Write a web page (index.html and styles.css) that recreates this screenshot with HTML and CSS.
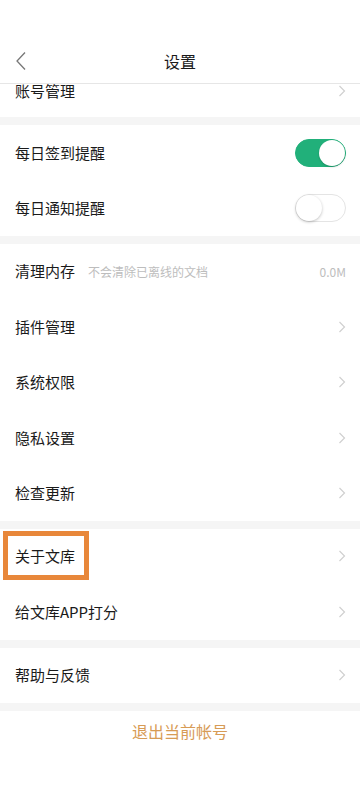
FILE: index.html
```html
<!DOCTYPE html>
<html lang="zh-CN">
<head>
<meta charset="utf-8">
<title>设置</title>
<link rel="stylesheet" href="styles.css">
</head>
<body>
<div class="page">
  <header class="header">
    <div class="nav">
      <svg class="back" width="14" height="20" viewBox="0 0 14 20"><path d="M11 1.5 L3 10 L11 18.5" fill="none" stroke="#777" stroke-width="1.3"/></svg>
      <div class="title">设置</div>
    </div>
  </header>

  <section class="group">
    <div class="row row-clipped">
      <span class="label">账号管理</span>
      <svg class="chev" width="8" height="12" viewBox="0 0 8 12"><path d="M1.5 1 L6.5 6 L1.5 11" fill="none" stroke="#d0d0d0" stroke-width="1.2"/></svg>
    </div>
  </section>

  <section class="group">
    <div class="row">
      <span class="label">每日签到提醒</span>
      <span class="switch on"><span class="knob"></span></span>
    </div>
    <div class="row">
      <span class="label">每日通知提醒</span>
      <span class="switch"><span class="knob"></span></span>
    </div>
  </section>

  <section class="group">
    <div class="row">
      <span class="label">清理内存</span>
      <span class="hint">不会清除已离线的文档</span>
      <span class="value">0.0M</span>
    </div>
    <div class="row">
      <span class="label">插件管理</span>
      <svg class="chev" width="8" height="12" viewBox="0 0 8 12"><path d="M1.5 1 L6.5 6 L1.5 11" fill="none" stroke="#d0d0d0" stroke-width="1.2"/></svg>
    </div>
    <div class="row">
      <span class="label">系统权限</span>
      <svg class="chev" width="8" height="12" viewBox="0 0 8 12"><path d="M1.5 1 L6.5 6 L1.5 11" fill="none" stroke="#d0d0d0" stroke-width="1.2"/></svg>
    </div>
    <div class="row">
      <span class="label">隐私设置</span>
      <svg class="chev" width="8" height="12" viewBox="0 0 8 12"><path d="M1.5 1 L6.5 6 L1.5 11" fill="none" stroke="#d0d0d0" stroke-width="1.2"/></svg>
    </div>
    <div class="row">
      <span class="label">检查更新</span>
      <svg class="chev" width="8" height="12" viewBox="0 0 8 12"><path d="M1.5 1 L6.5 6 L1.5 11" fill="none" stroke="#d0d0d0" stroke-width="1.2"/></svg>
    </div>
  </section>

  <section class="group">
    <div class="row">
      <span class="highlight"></span>
      <span class="label">关于文库</span>
      <svg class="chev" width="8" height="12" viewBox="0 0 8 12"><path d="M1.5 1 L6.5 6 L1.5 11" fill="none" stroke="#d0d0d0" stroke-width="1.2"/></svg>
    </div>
    <div class="row">
      <span class="label">给文库APP打分</span>
      <svg class="chev" width="8" height="12" viewBox="0 0 8 12"><path d="M1.5 1 L6.5 6 L1.5 11" fill="none" stroke="#d0d0d0" stroke-width="1.2"/></svg>
    </div>
  </section>

  <section class="group">
    <div class="row">
      <span class="label">帮助与反馈</span>
      <svg class="chev" width="8" height="12" viewBox="0 0 8 12"><path d="M1.5 1 L6.5 6 L1.5 11" fill="none" stroke="#d0d0d0" stroke-width="1.2"/></svg>
    </div>
  </section>

  <div class="logout">退出当前帐号</div>
</div>
</body>
</html>
```

FILE: styles.css
```css
* { box-sizing: border-box; }
html, body { margin: 0; padding: 0; background: #fff; }
body {
  font-family: "Noto Sans CJK SC", "Noto Sans", "Liberation Sans", sans-serif;
  color: #1a1a1a;
}
.page { width: 360px; height: 800px; overflow: hidden; background: #fff; }

.header {
  padding-top: 39px;
  border-bottom: 1px solid #e6e6e6;
  background: #fff;
}
.nav {
  height: 44px;
  display: flex;
  align-items: center;
  justify-content: center;
  position: relative;
}
.back { position: absolute; left: 14px; top: 12px; }
.title { font-size: 16px; color: #1a1a1a; }

.group {
  background: #fff;
  border-bottom: 8px solid #f5f5f5;
}
.row {
  height: 55.4px;
  display: flex;
  align-items: center;
  padding: 0 14px 0 15px;
  position: relative;
}
.row-clipped {
  height: 33px;
  padding-bottom: 19px;
  align-items: center;
}
.label { font-size: 15px; color: #1a1a1a; line-height: 20px; }
.hint { font-size: 12px; color: #bdbdbd; margin-left: 13px; }
.value { font-size: 12px; color: #bdbdbd; margin-left: auto; }
.chev { margin-left: auto; }

.switch {
  margin-left: auto;
  width: 51px;
  height: 28px;
  border-radius: 14px;
  border: 1px solid #e4e4e4;
  background: #fff;
  position: relative;
}
.switch .knob {
  position: absolute;
  top: 0;
  left: 0;
  width: 26px;
  height: 26px;
  border-radius: 50%;
  background: #fff;
  box-shadow: 0 1px 3px rgba(0,0,0,0.25);
}
.switch.on {
  background: #21b07a;
  border-color: #21b07a;
}
.switch.on .knob {
  left: auto;
  right: 0;
  box-shadow: 0 1px 2px rgba(0,0,0,0.2);
}

.highlight {
  position: absolute;
  left: 3px;
  top: 2px;
  width: 86px;
  height: 49px;
  border: 5px solid #e8873a;
}

.logout {
  height: 40px;
  display: flex;
  align-items: center;
  justify-content: center;
  font-size: 16px;
  color: #d79b55;
}
```
